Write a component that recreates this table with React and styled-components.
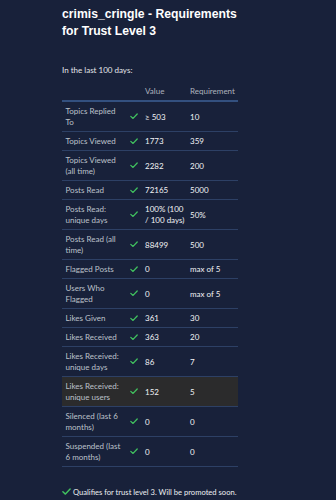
import React from "react";
import styled, { createGlobalStyle } from "styled-components";

const Global = createGlobalStyle`
  html, body {
    margin: 0;
    padding: 0;
    background: #18213a;
  }
  body {
    font-family: Lato, "Open Sans", sans-serif;
    color: #e6e8ec;
  }
`;

const Page = styled.main`
  width: 176px;
  padding: 6px 0 0 62px;`

const Title = styled.h1`
  font-family: "Liberation Sans", Arial, sans-serif;
  font-size: 12.2px;
  line-height: 17px;
  font-weight: bold;
  color: #ffffff;
  margin: 0 0 24px 0;`

const Intro = styled.p`
  font-size: 8px;
  line-height: 12px;
  margin: 0 0 8px 0;
  color: #e4e6ea;`

const Table = styled.table`
  width: 176px;
  border-collapse: collapse;
  border-spacing: 0;
  table-layout: fixed;
  font-size: 8px;
  line-height: 11px;`

const Head = styled.th`
  font-weight: normal;
  text-align: left;
  color: #aeb3bd;
  padding: 2px 0 3px 3px;
  border-bottom: 2px solid #33507f;`

const Row = styled.tr`
  background: ${p => (p.$hl ? "#2b2b2c" : "transparent")};
  border-bottom: 1px solid #2d4065;`

const Label = styled.td`
  color: #bdc1ca;
  padding: 4px 3px 3px 3.5px;
  vertical-align: middle;`

const CheckCell = styled.td`
  padding: 0 0 0 2px;
  vertical-align: middle;
  line-height: 0;`

const Value = styled.td`
  color: #f2f3f5;
  padding: 4px 2px 3px 3px;
  vertical-align: middle;`

const Footer = styled.div`
  display: flex;
  align-items: center;
  gap: 2px;
  width: 180px;
  padding-top: 19px;
  font-size: 7.6px;
  line-height: 12px;
  color: #eceef1;
  white-space: nowrap;
  svg { flex-shrink: 0; }`

const Check = ({ size = 8 }) => (
  <svg width={size} height={size * 0.8} viewBox="0 0 10 8" style={{ display: "block" }}>
    <path d="M1 4.2 L3.8 6.8 L9 1.2" fill="none" stroke="#41c25f" strokeWidth="1.6" strokeLinecap="round" strokeLinejoin="round" />
  </svg>
);

const rows = [
  ["Topics Replied To", "≥ 503", "10"],
  ["Topics Viewed", "1773", "359"],
  ["Topics Viewed (all time)", "2282", "200"],
  ["Posts Read", "72165", "5000"],
  ["Posts Read: unique days", "100% (100 / 100 days)", "50%"],
  ["Posts Read (all time)", "88499", "500"],
  ["Flagged Posts", "0", "max of 5"],
  ["Users Who Flagged", "0", "max of 5"],
  ["Likes Given", "361", "30"],
  ["Likes Received", "363", "20"],
  ["Likes Received: unique days", "86", "7"],
  ["Likes Received: unique users", "152", "5", true],
  ["Silenced (last 6 months)", "0", "0"],
  ["Suspended (last 6 months)", "0", "0"],
];

export default function App() {
  return (
    <Page>
      <Global />
      <Title>crimis_cringle - Requirements for Trust Level 3</Title>
      <Intro>In the last 100 days:</Intro>
      <Table>
        <colgroup>
          <col style={{ width: 66 }} />
          <col style={{ width: 14 }} />
          <col style={{ width: 45 }} />
          <col style={{ width: 51 }} />
        </colgroup>
        <thead>
          <tr>
            <Head />
            <Head />
            <Head>Value</Head>
            <Head>Requirement</Head>
          </tr>
        </thead>
        <tbody>
          {rows.map(([label, value, req, hl]) => (
            <Row key={label} $hl={hl}>
              <Label>{label}</Label>
              <CheckCell><Check /></CheckCell>
              <Value>{value}</Value>
              <Value>{req}</Value>
            </Row>
          ))}
        </tbody>
      </Table>
      <Footer><Check size={9} />Qualifies for trust level 3. Will be promoted soon.</Footer>
    </Page>
  );
}
